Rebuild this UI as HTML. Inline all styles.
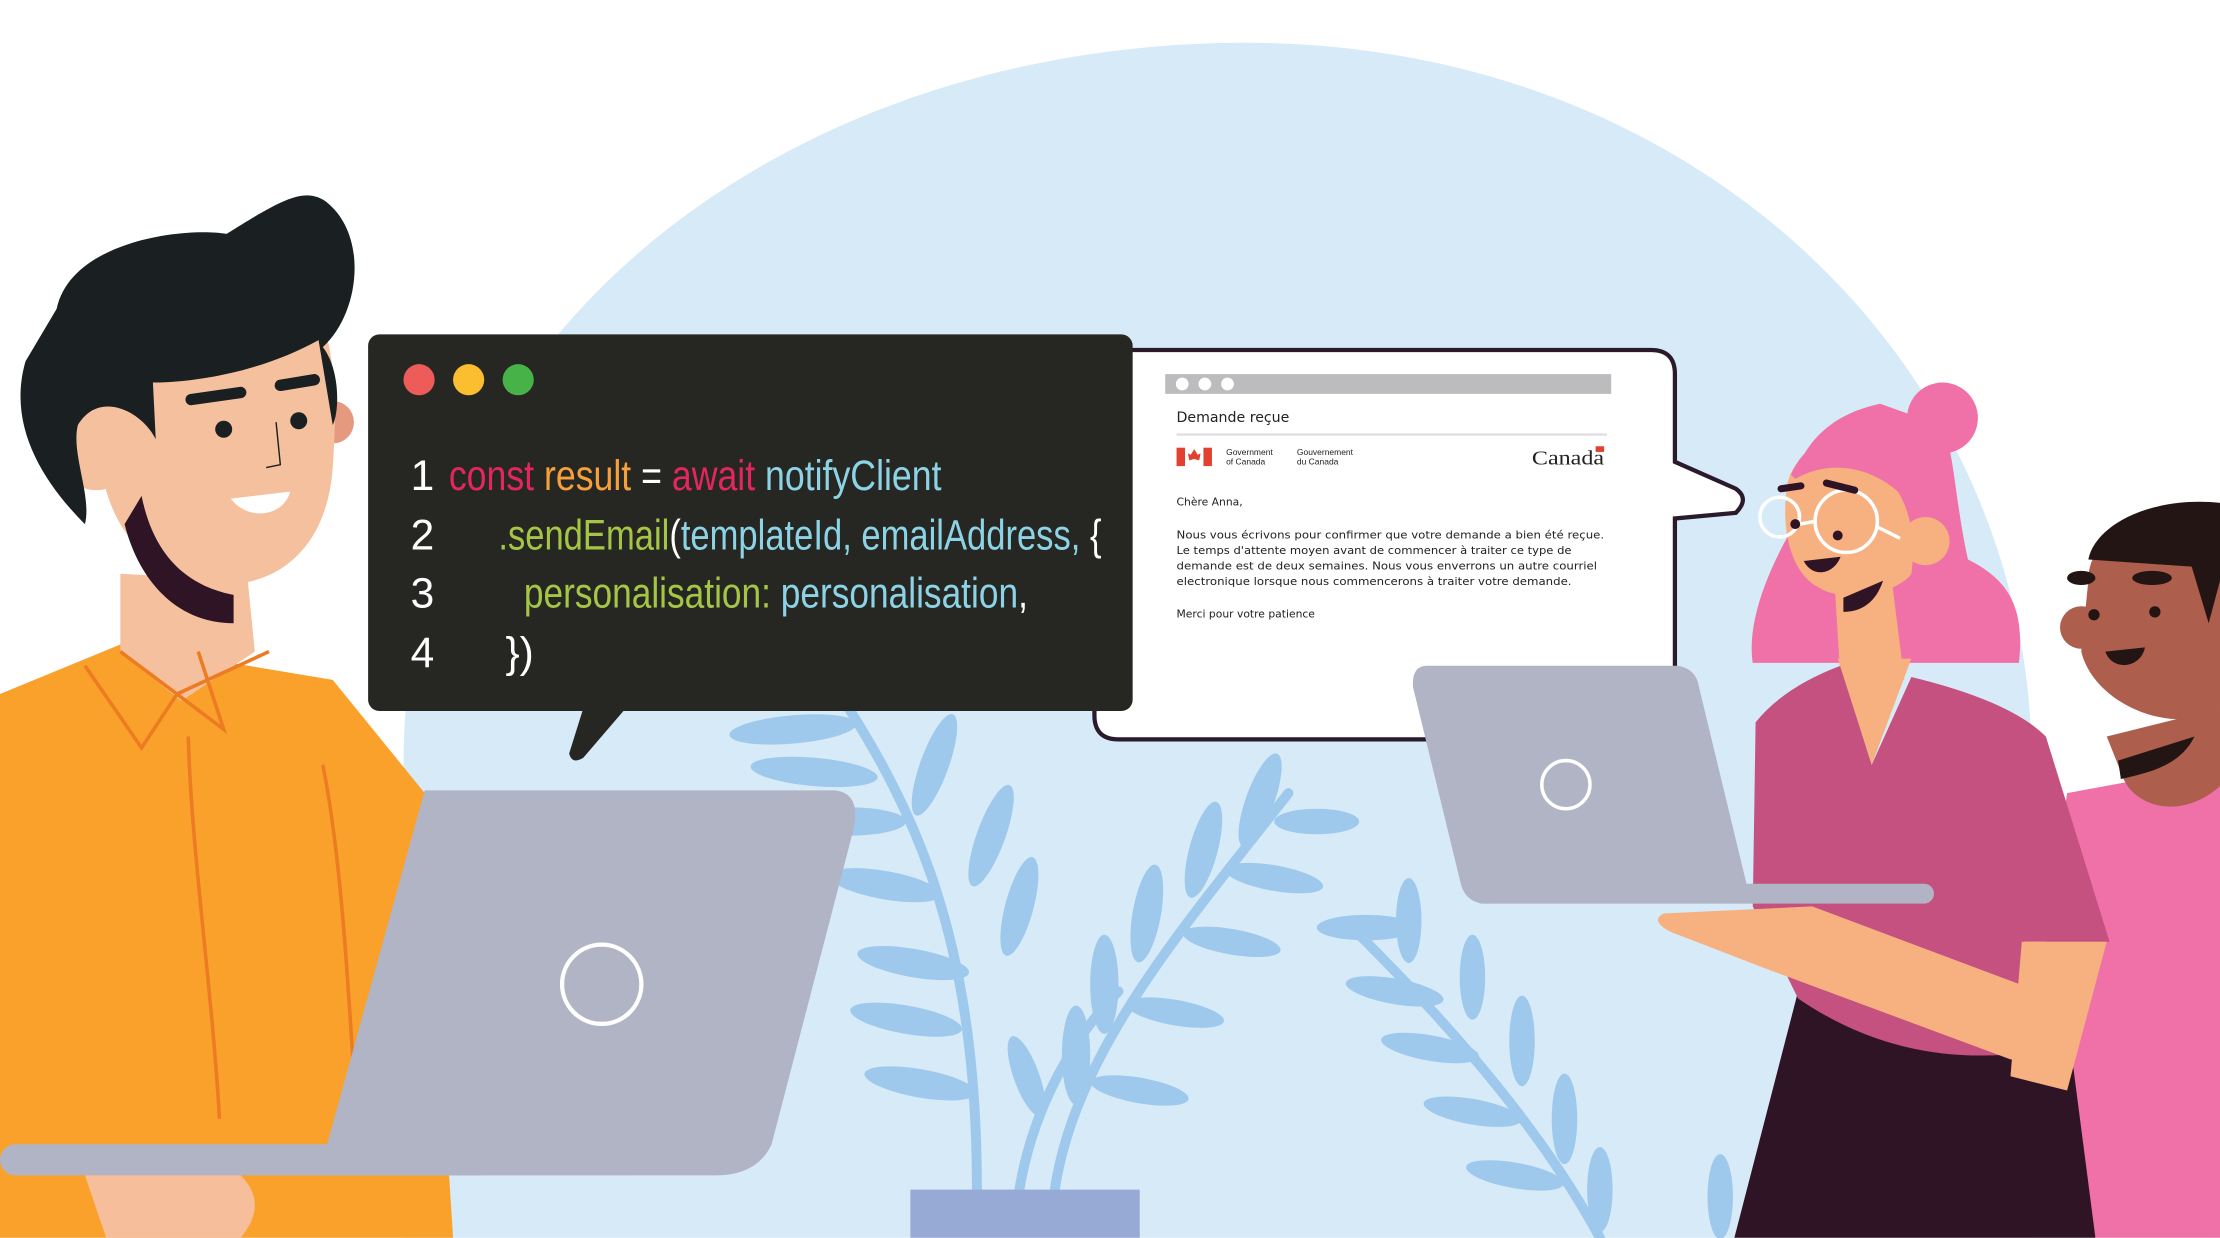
<!DOCTYPE html>
<html><head><meta charset="utf-8"><style>
html,body{margin:0;padding:0;background:#fff;overflow:hidden}
svg{display:block}
</style></head><body>
<svg width="2220" height="1238" viewBox="0 0 1568 874" xmlns="http://www.w3.org/2000/svg">
<rect width="1568" height="874" fill="#fff"/>
<path d="M285,874 L285,540 C285,230 560,30 880,30 C1200,30 1435,260 1435,540 L1435,874 Z" fill="#d6eaf8"/>
<!-- plants -->
<g stroke="#9ec9ec" stroke-width="7" fill="none" stroke-linecap="round">
<path d="M580,470 C640,560 690,650 690,840"/>
<path d="M910,560 C840,650 760,740 745,840"/>
<path d="M960,660 C1030,730 1090,800 1130,874"/>
<path d="M720,840 C730,780 760,730 790,700"/>
</g>
<g fill="#9ec9ec">
<ellipse cx="560" cy="515" rx="45" ry="10" transform="rotate(-5 560 515)"/>
<ellipse cx="575" cy="545" rx="45" ry="10" transform="rotate(5 575 545)"/>
<ellipse cx="660" cy="540" rx="10" ry="38" transform="rotate(20 660 540)"/>
<ellipse cx="600" cy="580" rx="40" ry="10"/>
<ellipse cx="700" cy="590" rx="10" ry="38" transform="rotate(20 700 590)"/>
<ellipse cx="625" cy="625" rx="40" ry="10" transform="rotate(10 625 625)"/>
<ellipse cx="720" cy="640" rx="10" ry="36" transform="rotate(15 720 640)"/>
<ellipse cx="645" cy="680" rx="40" ry="10" transform="rotate(10 645 680)"/>
<ellipse cx="640" cy="720" rx="40" ry="10" transform="rotate(10 640 720)"/>
<ellipse cx="650" cy="765" rx="40" ry="10" transform="rotate(10 650 765)"/>
<ellipse cx="890" cy="565" rx="10" ry="35" transform="rotate(20 890 565)"/>
<ellipse cx="930" cy="580" rx="30" ry="9"/>
<ellipse cx="850" cy="600" rx="10" ry="35" transform="rotate(15 850 600)"/>
<ellipse cx="900" cy="620" rx="35" ry="9" transform="rotate(10 900 620)"/>
<ellipse cx="810" cy="645" rx="10" ry="35" transform="rotate(10 810 645)"/>
<ellipse cx="870" cy="665" rx="35" ry="9" transform="rotate(10 870 665)"/>
<ellipse cx="780" cy="695" rx="10" ry="35"/>
<ellipse cx="830" cy="715" rx="35" ry="9" transform="rotate(10 830 715)"/>
<ellipse cx="760" cy="745" rx="10" ry="35"/>
<ellipse cx="805" cy="770" rx="35" ry="9" transform="rotate(10 805 770)"/>
<ellipse cx="725" cy="760" rx="9" ry="30" transform="rotate(-20 725 760)"/>
<ellipse cx="965" cy="655" rx="35" ry="9"/>
<ellipse cx="995" cy="650" rx="9" ry="30"/>
<ellipse cx="985" cy="700" rx="35" ry="9" transform="rotate(10 985 700)"/>
<ellipse cx="1040" cy="690" rx="9" ry="30"/>
<ellipse cx="1010" cy="740" rx="35" ry="9" transform="rotate(10 1010 740)"/>
<ellipse cx="1075" cy="735" rx="9" ry="32"/>
<ellipse cx="1040" cy="785" rx="35" ry="9" transform="rotate(10 1040 785)"/>
<ellipse cx="1105" cy="790" rx="9" ry="32"/>
<ellipse cx="1070" cy="830" rx="35" ry="9" transform="rotate(10 1070 830)"/>
<ellipse cx="1130" cy="840" rx="9" ry="30"/>
<ellipse cx="1215" cy="845" rx="9" ry="30"/>
</g>
<path d="M643,840 L805,840 L805,874 L643,874 Z" fill="#97aad6"/>

<!-- email bubble -->
<path d="M790,247 L1166,247 Q1183,247 1183,264 L1183,326 L1226,345 Q1236,352 1226,362 L1183,366 L1183,505 Q1183,522 1166,522 L790,522 Q773,522 773,505 L773,264 Q773,247 790,247 Z" fill="#fff" stroke="#2b1a2a" stroke-width="3"/>
<rect x="823" y="264" width="315" height="14" fill="#bcbcbe"/>
<circle cx="835" cy="271" r="4.5" fill="#fff"/><circle cx="851" cy="271" r="4.5" fill="#fff"/><circle cx="867" cy="271" r="4.5" fill="#fff"/>
<g font-family="'DejaVu Sans','Liberation Sans',sans-serif" fill="#222">
<text x="831" y="298" font-size="10">Demande reçue</text>
<rect x="831" y="306" width="304" height="1.5" fill="#ddd"/>
<rect x="831" y="316" width="6" height="13" fill="#e1412e"/><rect x="850" y="316" width="6" height="13" fill="#e1412e"/>
<path d="M843.5,317 L846,321 L848,320 L847,325 L843.5,324 L840,325 L839,320 L841,321 Z" fill="#e1412e"/>
<text x="866" y="321" font-size="6" font-family="'Liberation Sans',sans-serif">Government</text>
<text x="866" y="328" font-size="6" font-family="'Liberation Sans',sans-serif">of Canada</text>
<text x="916" y="321" font-size="6" font-family="'Liberation Sans',sans-serif">Gouvernement</text>
<text x="916" y="328" font-size="6" font-family="'Liberation Sans',sans-serif">du Canada</text>
<text x="1082" y="328" font-size="14" font-family="'Liberation Serif',serif" textLength="51" lengthAdjust="spacingAndGlyphs">Canada</text>
<rect x="1127" y="315" width="6" height="4" fill="#e1412e"/>
<g font-size="7.6">
<text x="831" y="357">Chère Anna,</text>
<text x="831" y="380" textLength="302" lengthAdjust="spacingAndGlyphs">Nous vous écrivons pour confirmer que votre demande a bien été reçue.</text>
<text x="831" y="391" textLength="279" lengthAdjust="spacingAndGlyphs">Le temps d'attente moyen avant de commencer à traiter ce type de</text>
<text x="831" y="402" textLength="297" lengthAdjust="spacingAndGlyphs">demande est de deux semaines. Nous vous enverrons un autre courriel</text>
<text x="831" y="413" textLength="279" lengthAdjust="spacingAndGlyphs">electronique lorsque nous commencerons à traiter votre demande.</text>
<text x="831" y="436">Merci pour votre patience</text>
</g>
</g>

<!-- code box -->
<rect x="260" y="236" width="540" height="266" rx="8" fill="#262723"/>
<path d="M412,500 L442,500 L412,535 Q404,540 402,532 Z" fill="#262723"/>
<circle cx="296" cy="268" r="11" fill="#ee5c5a"/>
<circle cx="331" cy="268" r="11" fill="#fbbe2e"/>
<circle cx="366" cy="268" r="11" fill="#47b248"/>
<g font-family="'Liberation Sans Narrow','Liberation Sans',sans-serif" font-size="30">
<text x="290" y="346" fill="#fff">1</text>
<text x="290" y="388" fill="#fff">2</text>
<text x="290" y="429" fill="#fff">3</text>
<text x="290" y="471" fill="#fff">4</text>
<text x="317" y="346" textLength="348" lengthAdjust="spacingAndGlyphs"><tspan fill="#e2265f">const </tspan><tspan fill="#f5a03a">result </tspan><tspan fill="#fff">= </tspan><tspan fill="#e2265f">await </tspan><tspan fill="#8dd3e6">notifyClient</tspan></text>
<text x="352" y="388" textLength="426" lengthAdjust="spacingAndGlyphs"><tspan fill="#a5c545">.sendEmail</tspan><tspan fill="#fff">(</tspan><tspan fill="#8dd3e6">templateId, emailAddress, </tspan><tspan fill="#fff">{</tspan></text>
<text x="370" y="429" textLength="356" lengthAdjust="spacingAndGlyphs"><tspan fill="#a5c545">personalisation: </tspan><tspan fill="#8dd3e6">personalisation</tspan><tspan fill="#fff">,</tspan></text>
<text x="357" y="471" fill="#fff">})</text>
</g>

<!-- left man -->
<path d="M0,490 L85,455 L235,480 L300,560 L320,874 L0,874 Z" fill="#f9a12a"/>
<path d="M85,405 L85,460 L128,495 L180,460 L175,410 Z" fill="#f5c09d"/>
<g stroke="#ec7b22" stroke-width="2.5" fill="none">
<path d="M85,460 L125,490 L190,460"/><path d="M60,470 L100,528 L125,490"/><path d="M140,460 L158,515 L125,490"/>
<path d="M133,520 C135,600 150,700 155,790"/><path d="M228,540 C240,600 245,680 250,760"/>
</g>
<circle cx="235" cy="298" r="15" fill="#e59a7f"/>
<path d="M60,250 C60,180 120,160 190,190 C235,205 240,260 235,330 C230,400 180,420 140,410 C100,400 75,370 70,320 Z" fill="#f5c09d"/>
<path d="M100,350 C110,400 140,415 165,420 L165,440 C125,440 98,410 88,370 Z" fill="#2f1425"/>
<circle cx="68" cy="318" r="28" fill="#f5c09d"/>
<path d="M40,218 C50,170 130,160 160,165 C200,140 215,132 230,142 C260,165 255,220 228,245 C240,260 240,290 235,300 L225,240 C180,265 130,270 108,270 L110,310 C100,290 70,275 55,300 C50,320 65,350 60,370 C30,340 5,300 18,255 Z" fill="#1a1f21"/>
<path d="M135,282 L170,277" stroke="#1a1f21" stroke-width="8" stroke-linecap="round"/>
<path d="M198,272 L222,268" stroke="#1a1f21" stroke-width="8" stroke-linecap="round"/>
<circle cx="158" cy="303" r="6" fill="#1a1f21"/><circle cx="211" cy="297" r="6" fill="#1a1f21"/>
<path d="M163,352 L205,347 C200,365 175,368 163,352 Z" fill="#fff"/>
<path d="M195,298 L198,328 L188,330" stroke="#1a1f21" stroke-width="1" fill="none"/>
<!-- left laptop -->
<path d="M300,558 L590,558 Q608,560 603,585 L545,808 Q535,830 505,830 L225,830 Z" fill="#b1b4c5"/>
<rect x="0" y="808" width="350" height="22" rx="11" fill="#b1b4c5"/>
<circle cx="425" cy="695" r="28" fill="none" stroke="#fff" stroke-width="3"/>
<path d="M60,830 L170,830 Q190,850 170,874 L75,874 Z" fill="#f7be9b"/>

<!-- right man -->
<path d="M1460,560 L1568,540 L1568,874 L1480,874 L1440,700 Z" fill="#f070a8"/>
<path d="M1488,520 L1568,500 L1568,555 C1540,580 1505,570 1498,545 Z" fill="#ae5e4c"/>
<circle cx="1470" cy="443" r="15" fill="#ae5e4c"/>
<path d="M1475,410 C1475,370 1530,360 1568,372 L1568,500 C1540,520 1480,500 1470,460 Z" fill="#ae5e4c"/>
<path d="M1475,395 C1480,370 1520,350 1568,355 L1568,410 L1560,440 L1548,400 Z" fill="#231513"/>
<path d="M1496,537 L1550,520 C1540,540 1520,545 1498,550 Z" fill="#231513"/>
<ellipse cx="1470" cy="408" rx="10" ry="5" fill="#231513"/><ellipse cx="1520" cy="408" rx="14" ry="5" fill="#231513"/>
<circle cx="1479" cy="434" r="4" fill="#231513"/><circle cx="1522" cy="432" r="4" fill="#231513"/>
<path d="M1487,460 L1515,457 C1512,472 1492,474 1487,460 Z" fill="#231513"/>

<!-- woman -->
<path d="M1328,285 C1280,295 1260,330 1262,380 C1240,420 1235,450 1238,468 L1426,468 C1430,430 1420,410 1390,395 C1380,350 1380,310 1370,300 Z" fill="#f070a8"/>
<circle cx="1372" cy="295" r="25" fill="#f070a8"/>
<path d="M1295,400 L1335,400 L1345,480 L1300,480 Z" fill="#f7b080"/>
<path d="M1270,700 L1460,720 L1480,874 L1225,874 Z" fill="#2f1425"/>
<path d="M1240,510 Q1260,485 1300,470 L1322,540 L1350,478 Q1420,495 1445,520 L1490,665 L1430,665 L1452,740 Q1350,760 1270,705 L1238,640 Z" fill="#c4517f"/>
<path d="M1298,465 L1350,465 L1322,540 Z" fill="#f7b080"/>
<circle cx="1360" cy="382" r="17" fill="#f7b080"/>
<path d="M1262,345 C1265,318 1295,305 1320,322 C1345,345 1355,370 1350,405 C1340,420 1300,425 1285,415 C1265,405 1258,375 1262,345 Z" fill="#f7b080"/>
<path d="M1265,335 C1280,300 1320,300 1335,318 C1345,330 1350,345 1352,360 C1335,335 1300,320 1268,338 Z" fill="#f070a8"/>
<path d="M1175,645 L1280,640 L1440,700 L1455,750 L1420,748 L1250,685 L1180,658 Q1165,650 1175,645 Z" fill="#f7b080"/>
<path d="M1428,665 L1488,665 L1460,770 L1420,760 Z" fill="#f7b080"/>
<circle cx="1257" cy="365" r="14" fill="none" stroke="#fff" stroke-width="2.5"/>
<circle cx="1304" cy="368" r="22" fill="none" stroke="#fff" stroke-width="2.5"/>
<path d="M1271,370 L1282,368 M1326,372 L1342,380" stroke="#fff" stroke-width="2.5"/>
<circle cx="1268" cy="370" r="3.5" fill="#2f1425"/><circle cx="1298" cy="378" r="3.5" fill="#2f1425"/>
<path d="M1258,345 L1272,343 M1290,341 L1310,346" stroke="#2f1425" stroke-width="5" stroke-linecap="round"/>
<path d="M1274,396 L1300,393 C1295,406 1280,408 1274,396 Z" fill="#2f1425"/>
<path d="M1302,422 L1330,410 C1325,425 1315,432 1302,432 Z" fill="#2f1425"/>
<!-- right laptop -->
<path d="M1008,470 L1185,470 Q1198,472 1200,485 L1235,630 L1050,638 Q1036,638 1032,625 L998,485 Q997,470 1008,470 Z" fill="#b1b4c5"/>
<rect x="1040" y="624" width="326" height="14" rx="7" fill="#b1b4c5"/>
<circle cx="1106" cy="554" r="17" fill="none" stroke="#fff" stroke-width="2.5"/>
</svg>
</body></html>
